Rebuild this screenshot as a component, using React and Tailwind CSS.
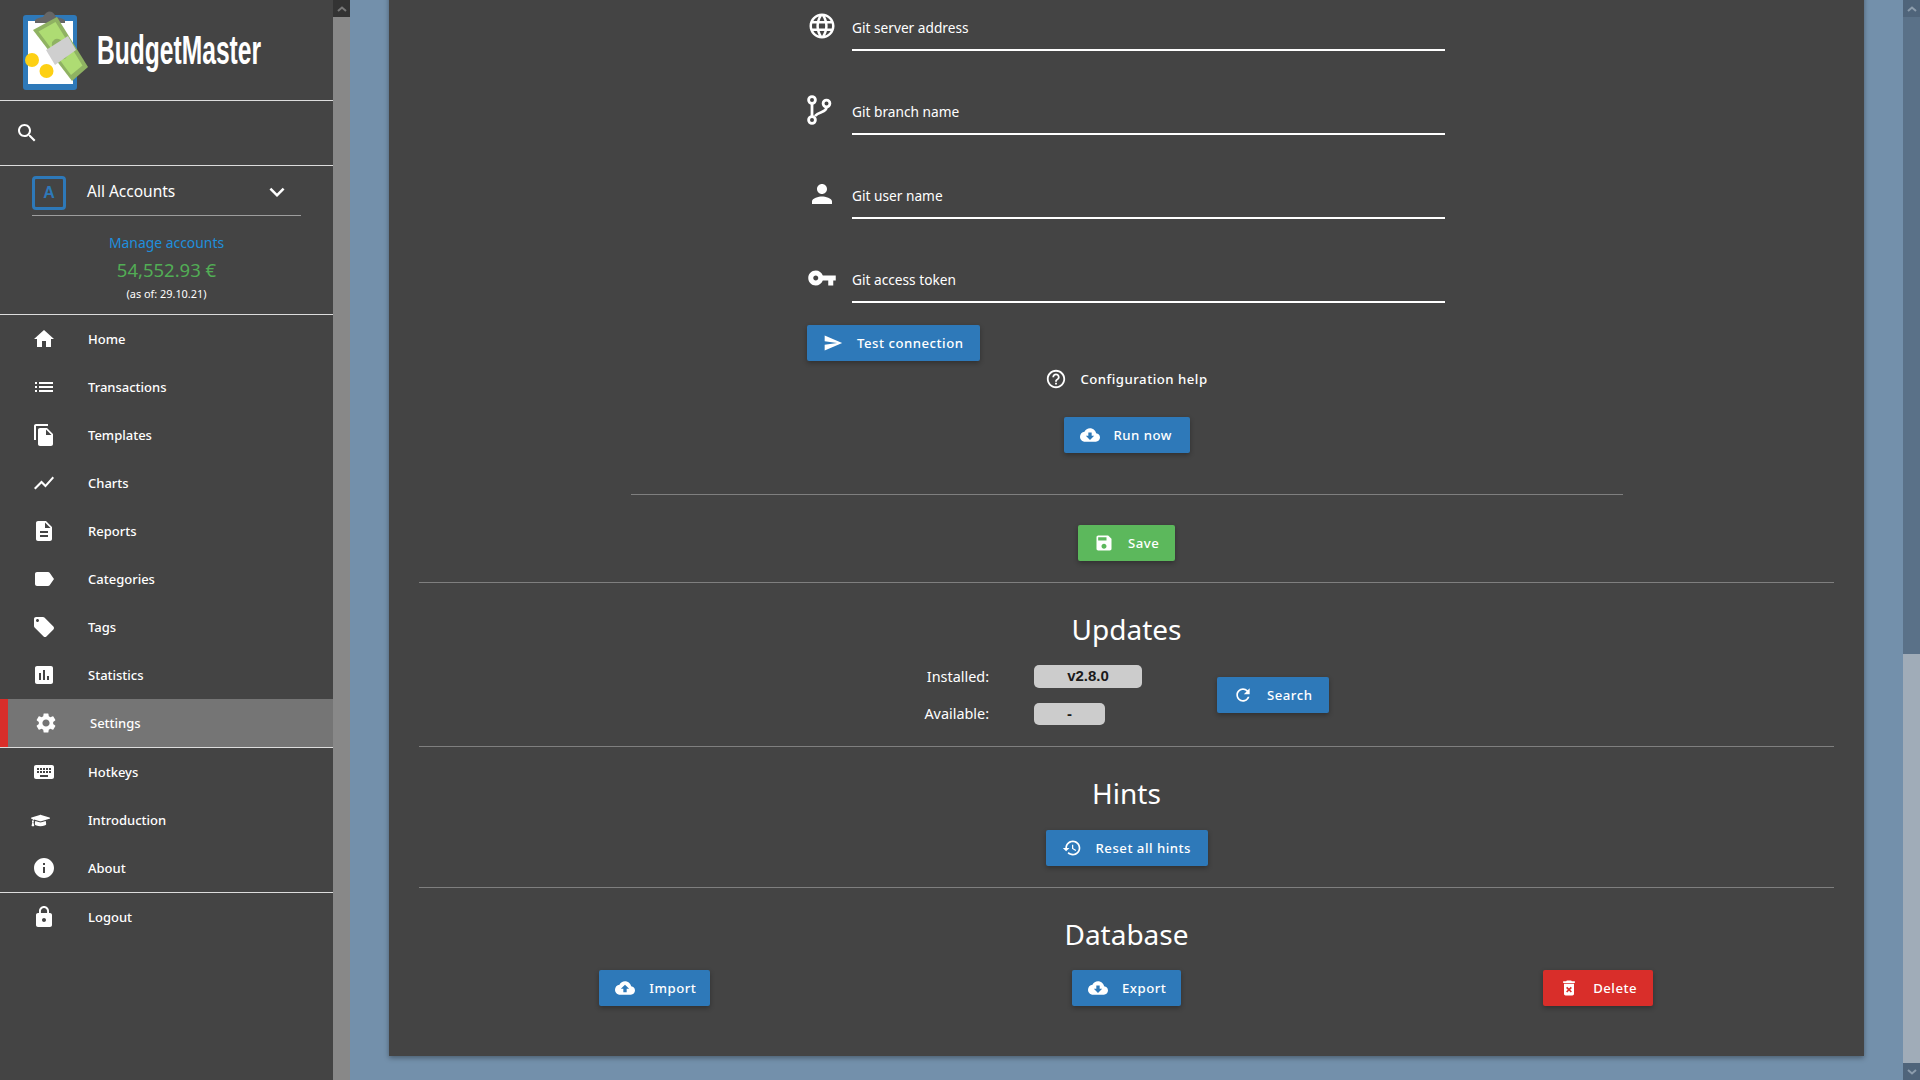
import React from "react";
import { FaGraduationCap } from "react-icons/fa";

const P = {
  search: "M15.5 14h-.79l-.28-.27C15.41 12.59 16 11.11 16 9.5 16 5.91 13.09 3 9.5 3S3 5.91 3 9.5 5.91 16 9.5 16c1.61 0 3.09-.59 4.23-1.57l.27.28v.79l5 4.99L20.49 19l-4.99-5zm-6 0C7.01 14 5 11.99 5 9.5S7.01 5 9.5 5 14 7.01 14 9.5 11.99 14 9.5 14z",
  home: "M10 20v-6h4v6h5v-8h3L12 3 2 12h3v8z",
  list: "M3 13h2v-2H3v2zm0 4h2v-2H3v2zm0-8h2V7H3v2zm4 4h14v-2H7v2zm0 4h14v-2H7v2zM7 7v2h14V7H7z",
  copy: "M16 1H4c-1.1 0-2 .9-2 2v14h2V3h12V1zm-1 4l6 6v10c0 1.1-.9 2-2 2H7.99C6.89 23 6 22.1 6 21l.01-14c0-1.1.89-2 1.99-2h7zm-1 7h5.5L14 6.5V12z",
  chart: "M3.5 18.49l6-6.01 4 4L22 6.92l-1.41-1.41-7.09 7.97-4-4L2 16.99z",
  desc: "M14 2H6c-1.1 0-1.99.9-1.99 2L4 20c0 1.1.89 2 1.99 2H18c1.1 0 2-.9 2-2V8l-6-6zm2 16H8v-2h8v2zm0-4H8v-2h8v2zm-3-5V3.5L18.5 9H13z",
  label: "M17.63 5.84C17.27 5.33 16.67 5 16 5L5 5.01C3.9 5.01 3 5.9 3 7v10c0 1.1.9 1.99 2 1.99L16 19c.67 0 1.27-.33 1.63-.84L22 12l-4.37-6.16z",
  tag: "M21.41 11.58l-9-9C12.05 2.22 11.55 2 11 2H4c-1.1 0-2 .9-2 2v7c0 .55.22 1.05.59 1.42l9 9c.36.36.86.58 1.41.58.55 0 1.05-.22 1.41-.59l7-7c.37-.36.59-.86.59-1.41 0-.55-.23-1.06-.59-1.42zM5.5 7C4.67 7 4 6.33 4 5.5S4.67 4 5.5 4 7 4.67 7 5.5 6.33 7 5.5 7z",
  stats: "M19 3H5c-1.1 0-2 .9-2 2v14c0 1.1.9 2 2 2h14c1.1 0 2-.9 2-2V5c0-1.1-.9-2-2-2zM9 17H7v-7h2v7zm4 0h-2V7h2v10zm4 0h-2v-4h2v4z",
  settings: "M19.14 12.94c.04-.3.06-.61.06-.94 0-.32-.02-.64-.07-.94l2.03-1.58a.49.49 0 0 0 .12-.61l-1.92-3.32a.488.488 0 0 0-.59-.22l-2.39.96c-.5-.38-1.03-.7-1.62-.94l-.36-2.54a.484.484 0 0 0-.48-.41h-3.84c-.24 0-.43.17-.47.41l-.36 2.54c-.59.24-1.13.57-1.62.94l-2.39-.96c-.22-.08-.47 0-.59.22L2.74 8.87c-.12.21-.08.47.12.61l2.03 1.58c-.05.3-.09.63-.09.94s.02.64.07.94l-2.03 1.58a.49.49 0 0 0-.12.61l1.92 3.32c.12.22.37.29.59.22l2.39-.96c.5.38 1.03.7 1.62.94l.36 2.54c.05.24.24.41.48.41h3.84c.24 0 .44-.17.47-.41l.36-2.54c.59-.24 1.13-.56 1.62-.94l2.39.96c.22.08.47 0 .59-.22l1.92-3.32c.12-.22.07-.47-.12-.61l-2.01-1.58zM12 15.6c-1.98 0-3.6-1.62-3.6-3.6s1.62-3.6 3.6-3.6 3.6 1.62 3.6 3.6-1.62 3.6-3.6 3.6z",
  keyboard: "M20 5H4c-1.1 0-1.99.9-1.99 2L2 17c0 1.1.9 2 2 2h16c1.1 0 2-.9 2-2V7c0-1.1-.9-2-2-2zm-9 3h2v2h-2V8zm0 3h2v2h-2v-2zM8 8h2v2H8V8zm0 3h2v2H8v-2zm-1 2H5v-2h2v2zm0-3H5V8h2v2zm9 7H8v-2h8v2zm0-4h-2v-2h2v2zm0-3h-2V8h2v2zm3 3h-2v-2h2v2zm0-3h-2V8h2v2z",
  info: "M12 2C6.48 2 2 6.48 2 12s4.48 10 10 10 10-4.48 10-10S17.52 2 12 2zm1 15h-2v-6h2v6zm0-8h-2V7h2v2z",
  lock: "M18 8h-1V6c0-2.76-2.24-5-5-5S7 3.24 7 6v2H6c-1.1 0-2 .9-2 2v10c0 1.1.9 2 2 2h12c1.1 0 2-.9 2-2V10c0-1.1-.9-2-2-2zm-6 9c-1.1 0-2-.9-2-2s.9-2 2-2 2 .9 2 2-.9 2-2 2zm3.1-9H8.9V6c0-1.71 1.39-3.1 3.1-3.1 1.71 0 3.1 1.39 3.1 3.1v2z",
  language: "M11.99 2C6.47 2 2 6.48 2 12s4.47 10 9.99 10C17.52 22 22 17.52 22 12S17.52 2 11.99 2zm6.93 6h-2.95c-.32-1.25-.78-2.45-1.38-3.56 1.84.63 3.37 1.91 4.33 3.56zM12 4.04c.83 1.2 1.48 2.53 1.91 3.96h-3.82c.43-1.43 1.08-2.76 1.91-3.96zM4.26 14C4.1 13.36 4 12.69 4 12s.1-1.36.26-2h3.38c-.08.66-.14 1.32-.14 2 0 .68.06 1.34.14 2H4.26zm.82 2h2.95c.32 1.25.78 2.45 1.38 3.56-1.84-.63-3.37-1.9-4.33-3.56zm2.95-8H5.08c.96-1.66 2.49-2.93 4.33-3.56C8.81 5.55 8.35 6.75 8.03 8zM12 19.96c-.83-1.2-1.48-2.53-1.91-3.96h3.82c-.43 1.43-1.08 2.76-1.91 3.96zM14.34 14H9.66c-.09-.66-.16-1.32-.16-2 0-.68.07-1.35.16-2h4.68c.09.65.16 1.32.16 2 0 .68-.07 1.34-.16 2zm.25 5.56c.6-1.11 1.06-2.31 1.38-3.56h2.95c-.96 1.65-2.49 2.93-4.33 3.56zM16.36 14c.08-.66.14-1.32.14-2 0-.68-.06-1.34-.14-2h3.38c.16.64.26 1.31.26 2s-.1 1.36-.26 2h-3.38z",
  person: "M12 12c2.21 0 4-1.79 4-4s-1.79-4-4-4-4 1.79-4 4 1.79 4 4 4zm0 2c-2.67 0-8 1.34-8 4v2h16v-2c0-2.66-5.33-4-8-4z",
  key: "M12.65 10C11.83 7.67 9.61 6 7 6c-3.31 0-6 2.69-6 6s2.69 6 6 6c2.61 0 4.83-1.67 5.65-4H17v4h4v-4h2v-4H12.65zM7 14c-1.1 0-2-.9-2-2s.9-2 2-2 2 .9 2 2-.9 2-2 2z",
  send: "M2.01 21L23 12 2.01 3 2 10l15 2-15 2z",
  help: "M11 18h2v-2h-2v2zm1-16C6.48 2 2 6.48 2 12s4.48 10 10 10 10-4.48 10-10S17.52 2 12 2zm0 18c-4.41 0-8-3.59-8-8s3.59-8 8-8 8 3.59 8 8-3.59 8-8 8zm0-14c-2.21 0-4 1.79-4 4h2c0-1.1.9-2 2-2s2 .9 2 2c0 2-3 1.75-3 5h2c0-2.25 3-2.5 3-5 0-2.21-1.79-4-4-4z",
  cloudDown: "M19.35 10.04C18.67 6.59 15.64 4 12 4 9.11 4 6.6 5.64 5.35 8.04 2.34 8.36 0 10.91 0 14c0 3.31 2.69 6 6 6h13c2.76 0 5-2.24 5-5 0-2.64-2.05-4.78-4.65-4.96zM17 13l-5 5-5-5h3V9h4v4h3z",
  cloudUp: "M19.35 10.04C18.67 6.59 15.64 4 12 4 9.11 4 6.6 5.64 5.35 8.04 2.34 8.36 0 10.91 0 14c0 3.31 2.69 6 6 6h13c2.76 0 5-2.24 5-5 0-2.64-2.05-4.78-4.65-4.96zM14 13v4h-4v-4H7l5-5 5 5h-3z",
  save: "M17 3H5c-1.11 0-2 .9-2 2v14c0 1.1.89 2 2 2h14c1.1 0 2-.9 2-2V7l-4-4zm-5 16c-1.66 0-3-1.34-3-3s1.34-3 3-3 3 1.34 3 3-1.34 3-3 3zm3-10H5V5h10v4z",
  refresh: "M17.65 6.35C16.2 4.9 14.21 4 12 4c-4.42 0-7.99 3.58-7.99 8s3.57 8 7.99 8c3.73 0 6.84-2.55 7.73-6h-2.08c-.82 2.33-3.04 4-5.65 4-3.31 0-6-2.69-6-6s2.69-6 6-6c1.66 0 3.14.69 4.22 1.78L13 11h7V4l-2.35 2.35z",
  restore: "M13 3c-4.97 0-9 4.03-9 9H1l3.89 3.89.07.14L9 12H6c0-3.87 3.13-7 7-7s7 3.13 7 7-3.13 7-7 7c-1.93 0-3.68-.79-4.94-2.06l-1.42 1.42C8.27 19.99 10.51 21 13 21c4.97 0 9-4.03 9-9s-4.03-9-9-9zm-1 5v5l4.28 2.54.72-1.21-3.5-2.08V8h-1.5z",
  trash: "M6 19c0 1.1.9 2 2 2h8c1.1 0 2-.9 2-2V7H6v12zm2.46-7.12l1.41-1.41L12 12.59l2.12-2.12 1.41 1.41L13.41 14l2.12 2.12-1.41 1.41L12 15.41l-2.12 2.12-1.41-1.41L10.59 14l-2.13-2.12zM15.5 4l-1-1h-5l-1 1H5v2h14V4z",
  expand: "M16.59 8.59L12 13.17 7.41 8.59 6 10l6 6 6-6z",
};

function Icon({ d, className = "w-6 h-6" }) {
  return (
    <svg viewBox="0 0 24 24" fill="currentColor" className={`shrink-0 ${className}`}>
      <path d={d} />
    </svg>
  );
}

function Logo() {
  return (
    <svg viewBox="0 0 100 100" className="w-[100px] h-[100px] shrink-0">
      <rect x="23" y="15" width="54" height="75" rx="3" fill="#2e79b9" />
      <rect x="28" y="21" width="45" height="63" fill="#ffffff" />
      <path d="M35 23 L35 20 Q37 18 43 17 Q47 10 52 12 Q55 14 56 17 Q62 18 65 20 L65 23 Z" fill="#666666" />
      <polygon points="33,30 57,17 88,67 72,81" fill="#8fb262" />
      <polygon points="38.5,31.5 55.5,22 82.5,65.5 71,75" fill="#aedc73" />
      <ellipse cx="60" cy="49" rx="7" ry="11" transform="rotate(-30 60 49)" fill="#8fb262" />
      <polygon points="46,50 68,36 76,50 55,65" fill="#cfcfcf" />
      <circle cx="32" cy="60" r="7" fill="#fdd014" />
      <circle cx="46.5" cy="71" r="7" fill="#fdd014" />
    </svg>
  );
}

function BranchIcon({ className }) {
  return (
    <svg viewBox="0 0 28 32" fill="none" stroke="currentColor" strokeWidth="2.8" className={className}>
      <circle cx="5" cy="5" r="3.4" />
      <circle cx="5" cy="25" r="3.4" />
      <circle cx="19.5" cy="8.5" r="3.4" />
      <path d="M5 8.5 V21.5" />
      <path d="M19.5 12 C19.5 18 12 16 8 21" />
    </svg>
  );
}

function NavItem({ icon, label, active, cap }) {
  return (
    <div
      className={
        active
          ? "flex items-center h-[48px] border-l-[8px] border-[#d92e2a] bg-[#757575] pl-[26px] gap-[32px]"
          : "flex items-center h-[48px] pl-[32px] gap-[32px]"
      }
    >
      {cap ? (
        <span className="w-6 h-6 flex items-center justify-start -ml-[1px] mr-[1px]">
          <FaGraduationCap className="w-[19px] h-[19px]" />
        </span>
      ) : (
        <Icon d={icon} />
      )}
      <span className="text-[13px] leading-5 font-medium">{label}</span>
    </div>
  );
}

function Btn({ icon, children, width, color = "bg-[#2e79b9]" }) {
  return (
    <button
      className={`flex items-center h-9 pl-4 gap-[14px] rounded-[2px] whitespace-nowrap text-white text-[13.2px] font-medium tracking-[0.5px] shadow-[0_2px_5px_rgba(0,0,0,0.3)] ${color} ${width}`}
    >
      <Icon d={icon} className="w-5 h-5" />
      <span className="pt-px">{children}</span>
    </button>
  );
}

function Field({ icon, label }) {
  return (
    <div className="flex h-[84px] items-end">
      <div className="w-[45px] h-full flex items-end pb-[10px] shrink-0 justify-start">{icon}</div>
      <div className="flex-1 h-[42px] border-b-2 border-white flex items-center text-[13.7px] pb-[2px]">{label}</div>
    </div>
  );
}

const Divider = ({ className }) => <div className={`h-px bg-[#7f7f7f] ${className}`} />;

export default function App() {
  const nav1 = [
    [P.home, "Home"],
    [P.list, "Transactions"],
    [P.copy, "Templates"],
    [P.chart, "Charts"],
    [P.desc, "Reports"],
    [P.label, "Categories"],
    [P.tag, "Tags"],
    [P.stats, "Statistics"],
  ];
  return (
    <div className="flex h-screen w-full overflow-hidden bg-[#7390ab] text-white font-['Noto_Sans',sans-serif]">
      <aside className="w-[333px] h-full bg-[#444444] shrink-0 flex flex-col">
        <div className="h-[100px] flex items-center shrink-0">
          <Logo />
          <span className="font-['Liberation_Sans',sans-serif] font-bold text-[40px] leading-none -ml-[3px] origin-left scale-x-[0.615] whitespace-nowrap">
            BudgetMaster
          </span>
        </div>
        <div className="h-px bg-[#dddddd] shrink-0" />
        <div className="h-[64px] flex items-center pl-[15px] shrink-0">
          <Icon d={P.search} />
        </div>
        <div className="h-px bg-[#dddddd] shrink-0" />
        <div className="h-[148px] shrink-0 pt-[10px] flex flex-col">
          <div className="mx-[32px] h-[40px] border-b border-[#9e9e9e] flex pb-[5px]">
            <div className="w-[34px] h-[34px] border-[3px] border-[#2e79b9] rounded-[4px] flex items-center justify-center text-[#2e79b9] font-bold text-[16px] font-['Liberation_Sans',sans-serif]">
              A
            </div>
            <span className="ml-[21px] text-[15.5px] leading-[30px]">All Accounts</span>
            <Icon d={P.expand} className="w-[30px] h-[30px] ml-auto mr-[9px] mt-[1px]" />
          </div>
          <div className="mt-[17px] h-5 leading-5 text-center text-[13.9px] text-[#1f8fdc]">Manage accounts</div>
          <div className="mt-[3px] h-7 leading-7 text-center text-[18.5px] text-[#52ad55]">54,552.93 €</div>
          <div className="mt-[2px] h-4 leading-4 text-center text-[10.9px]">(as of: 29.10.21)</div>
        </div>
        <div className="h-px bg-[#dddddd] shrink-0" />
        {nav1.map(([icon, label]) => (
          <NavItem key={label} icon={icon} label={label} />
        ))}
        <NavItem icon={P.settings} label="Settings" active />
        <div className="h-px bg-[#dddddd] shrink-0" />
        <NavItem icon={P.keyboard} label="Hotkeys" />
        <NavItem cap label="Introduction" />
        <NavItem icon={P.info} label="About" />
        <div className="h-px bg-[#dddddd] shrink-0" />
        <NavItem icon={P.lock} label="Logout" />
      </aside>

      <div className="w-[17px] h-full bg-[#888888] shrink-0">
        <div className="h-[17px] bg-[#333333] flex items-center justify-center">
          <svg viewBox="0 0 10 6" className="w-[10px] h-[6px]" fill="none" stroke="#777777" strokeWidth="2"><path d="M1 5 L5 1.5 L9 5" /></svg>
        </div>
      </div>

      <main className="flex-1 h-full flex flex-col justify-end pb-[24px] px-[39px] min-w-0">
        <section className="bg-[#444444] shadow-[0_2px_5px_rgba(0,0,0,0.35)] px-[30px] pb-[50px] pt-[16px] flex flex-col items-center shrink-0">
          <div className="w-[638px] mr-[1px]">
            <Field label="Git server address" icon={<Icon d={P.language} className="w-[30px] h-[30px]" />} />
            <Field label="Git branch name" icon={<BranchIcon className="w-[28px] h-[32px] -mb-[2px]" />} />
            <Field label="Git user name" icon={<Icon d={P.person} className="w-[30px] h-[30px]" />} />
            <Field label="Git access token" icon={<Icon d={P.key} className="w-[30px] h-[30px]" />} />
            <div className="mt-[22px] flex">
              <Btn icon={P.send} width="w-[173px]">Test connection</Btn>
            </div>
          </div>
          <div className="mt-[8px] h-5 flex items-center gap-[13px] text-[13.2px] font-medium tracking-[0.5px]">
            <Icon d={P.help} className="w-[22px] h-[22px]" />
            <span className="pt-px">Configuration help</span>
          </div>
          <div className="mt-[28px]">
            <Btn icon={P.cloudDown} width="w-[126px]">Run now</Btn>
          </div>
          <Divider className="mt-[41px] w-[992px]" />
          <div className="mt-[30px]">
            <Btn icon={P.save} width="w-[97px]" color="bg-[#5cb85c]">Save</Btn>
          </div>
          <Divider className="mt-[21px] w-full" />

          <h2 className="mt-[26px] mb-[1px] text-[28px] leading-[40px]">Updates</h2>
          <div className="w-full h-[96px] flex items-start">
            <div className="w-[570px] mt-[15px] flex flex-col items-end gap-[15px] text-[14.4px]">
              <div className="h-[23px] leading-[23px]">Installed:</div>
              <div className="h-[22px] leading-[22px]">Available:</div>
            </div>
            <div className="w-[183px] pl-[45px] mt-[15px] flex flex-col items-start gap-[15px] shrink-0 box-content">
              <div className="w-[108px] h-[23px] rounded-[5px] bg-[#cccccc] text-[#1a1a1a] font-bold text-[15px] flex items-center justify-center font-['Liberation_Sans',sans-serif]">v2.8.0</div>
              <div className="w-[71px] h-[22px] rounded-[5px] bg-[#cccccc] text-[#1a1a1a] font-bold text-[15px] flex items-center justify-center font-['Liberation_Sans',sans-serif]">-</div>
            </div>
            <div className="mt-[27px]">
              <Btn icon={P.refresh} width="w-[112px]">Search</Btn>
            </div>
          </div>
          <Divider className="w-full" />

          <h2 className="mt-[26px] text-[28px] leading-[40px]">Hints</h2>
          <div className="mt-[17px]">
            <Btn icon={P.restore} width="w-[162px]">Reset all hints</Btn>
          </div>
          <Divider className="mt-[21px] w-full" />

          <h2 className="mt-[26px] text-[28px] leading-[40px]">Database</h2>
          <div className="mt-[16px] w-full grid grid-cols-3 justify-items-center">
            <Btn icon={P.cloudUp} width="w-[111px]">Import</Btn>
            <Btn icon={P.cloudDown} width="w-[109px]">Export</Btn>
            <Btn icon={P.trash} width="w-[110px]" color="bg-[#d92e2a]">Delete</Btn>
          </div>
        </section>
      </main>

      <div className="w-[17px] h-full bg-[#5a7188] shrink-0 flex flex-col">
        <div className="h-[17px] bg-[#4f647a] flex items-center justify-center shrink-0">
          <svg viewBox="0 0 10 6" className="w-[10px] h-[6px]" fill="none" stroke="#8c9cac" strokeWidth="2"><path d="M1 5 L5 1.5 L9 5" /></svg>
        </div>
        <div className="flex-1" />
        <div className="h-[409px] bg-[#a0acb8] shrink-0" />
        <div className="h-[17px] bg-[#4f647a] flex items-center justify-center shrink-0">
          <svg viewBox="0 0 10 6" className="w-[10px] h-[6px]" fill="none" stroke="#8c9cac" strokeWidth="2"><path d="M1 1 L5 4.5 L9 1" /></svg>
        </div>
      </div>
    </div>
  );
}
